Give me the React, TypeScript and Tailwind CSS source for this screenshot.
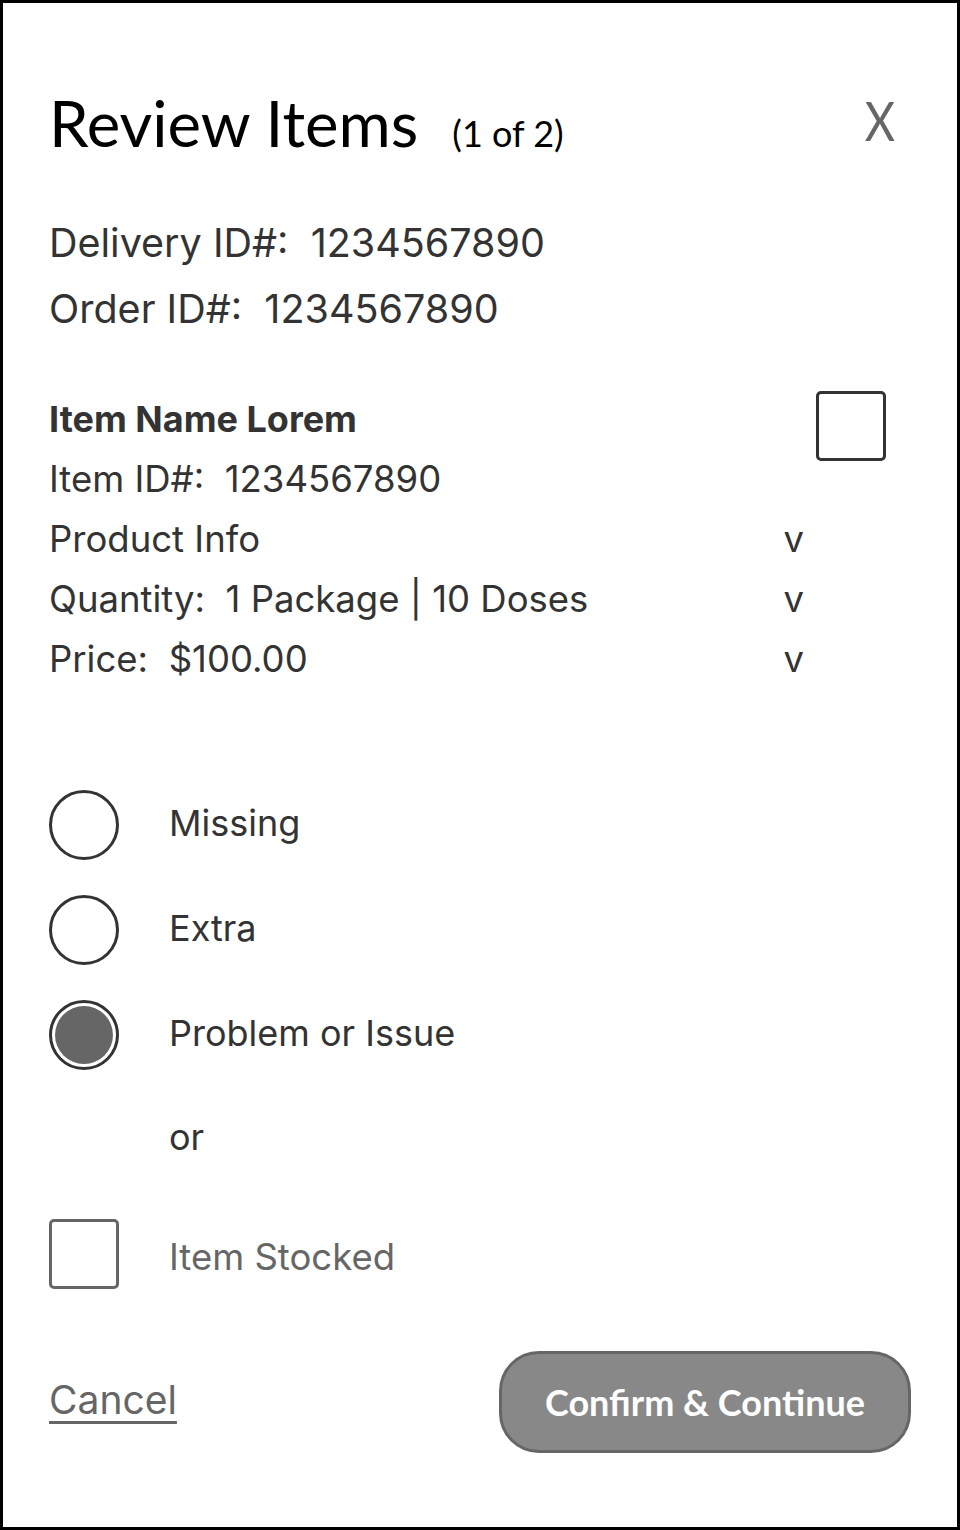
const details = [
  { label: "Product Info", toggle: true },
  { label: "Quantity:  1 Package | 10 Doses", toggle: true },
  { label: "Price:  $100.00", toggle: true },
];

const reasons = [
  { label: "Missing", selected: false },
  { label: "Extra", selected: false },
  { label: "Problem or Issue", selected: true },
];

function Radio({ selected }: { selected: boolean }) {
  return (
    <div className="w-[70px] h-[70px] rounded-full border-[3px] border-[#333] bg-white flex items-center justify-center shrink-0">
      {selected && <div className="w-[58px] h-[58px] rounded-full bg-[#666]" />}
    </div>
  );
}

export default function App() {
  return (
    <div className="w-[960px] h-[1530px] border-[3px] border-black bg-white px-[46px] pt-[88px] text-[#333] font-['Inter',sans-serif] whitespace-pre">
      {/* header */}
      <div className="flex items-start justify-between">
        <div className="flex items-baseline font-['Lato',sans-serif] text-black">
          <h1 className="text-[63.5px] leading-none">Review Items</h1>
          <span className="text-[36px] leading-none ml-[34px]">(1 of 2)</span>
        </div>
        <button className="font-['Lato',sans-serif] text-[55px] leading-none text-[#666] mr-[13px] mt-[2px] scale-x-[0.85]">
          X
        </button>
      </div>

      {/* ids */}
      <div className="mt-[55px] text-[39.5px] leading-[66px]">
        <div>Delivery ID#:  1234567890</div>
        <div>Order ID#:  1234567890</div>
      </div>

      {/* item */}
      <div className="mt-[47px] flex items-start pr-[25px]">
        <div className="flex-1 text-[36.5px] leading-[60px]">
          <div className="font-bold text-[36px]">Item Name Lorem</div>
          <div>Item ID#:  1234567890</div>
          {details.map((d) => (
            <div key={d.label} className="flex justify-between">
              <span>{d.label}</span>
              <span>v</span>
            </div>
          ))}
        </div>
        <div className="ml-[12px] mt-[2px] w-[70px] h-[70px] border-[3px] border-[#333] rounded-[5px]" />
      </div>

      {/* reasons */}
      <div className="mt-[101px] flex flex-col gap-[35px]">
        {reasons.map((r) => (
          <label key={r.label} className="flex items-center gap-[50px] h-[70px]">
            <Radio selected={r.selected} />
            <span className="text-[36px] -mt-[4px]">{r.label}</span>
          </label>
        ))}
      </div>

      <div className="mt-[32px] h-[70px] flex items-center pl-[120px] text-[36px]">or</div>

      <label className="mt-[47px] flex items-center gap-[50px] h-[70px]">
        <div className="w-[70px] h-[70px] border-[3px] border-[#666] rounded-[5px] shrink-0" />
        <span className="text-[36.5px] text-[#666] mt-[8px]">Item Stocked</span>
      </label>

      {/* footer */}
      <div className="mt-[62px] flex items-center justify-between">
        <a className="text-[39px] text-[#666] underline decoration-[3px] underline-offset-[7px] -mt-[2px]">
          Cancel
        </a>
        <button className="w-[412px] h-[102px] rounded-[40px] border-[3px] border-[#666] bg-[#888] text-white font-['Lato',sans-serif] font-bold text-[36px]">
          Confirm &amp; Continue
        </button>
      </div>
    </div>
  );
}
